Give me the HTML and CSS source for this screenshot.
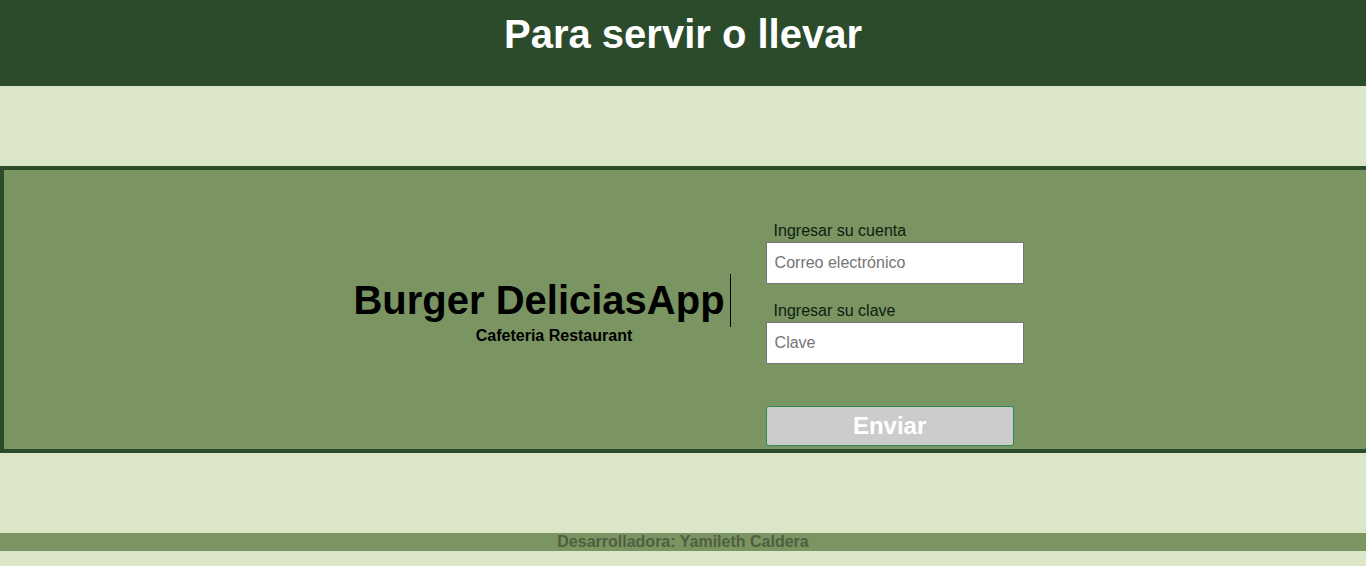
FILE: index.html
```html
<!DOCTYPE html>
<html lang="es">
<head>
<meta charset="utf-8">
<title>Burger DeliciasApp</title>
<link rel="stylesheet" href="styles.css">
</head>
<body>
<header class="top">
  <h1 class="top-title">Para servir o llevar</h1>
</header>
<main class="spacer">
  <section class="panel">
    <div class="brand">
      <h2 class="brand-name">Burger DeliciasApp</h2>
      <p class="brand-sub">Cafeteria Restaurant</p>
    </div>
    <form class="login">
      <label class="field-label" for="email">Ingresar su cuenta</label>
      <input class="field" id="email" type="email" placeholder="Correo electrónico">
      <label class="field-label second" for="pass">Ingresar su clave</label>
      <input class="field" id="pass" type="password" placeholder="Clave">
      <button class="send" type="button">Enviar</button>
    </form>
  </section>
</main>
<footer class="foot">Desarrolladora: Yamileth Caldera</footer>
</body>
</html>
```
FILE: styles.css
```css
html, body {
  margin: 0;
  padding: 0;
  overflow: hidden;
}
body {
  background: #dbe6c8;
  font-family: "Liberation Sans", Arial, sans-serif;
  height: 566px;
}
.top {
  background: #2b4b2b;
  height: 86px;
  box-sizing: border-box;
  padding-top: 11px;
}
.top-title {
  margin: 0;
  color: #fff;
  font-size: 40px;
  line-height: 46px;
  font-weight: bold;
  text-align: center;
}
.spacer {
  padding: 80px 0;
}
.panel {
  background: #7a9462;
  border: 4px solid #2b4b2b;
  border-right: none;
  height: 279px;
  display: flex;
  justify-content: center;
  align-items: center;
  gap: 35px;
  padding-left: 7px;
}
.brand {
  display: flex;
  flex-direction: column;
}
.brand-name {
  margin: 0;
  font-size: 40px;
  line-height: 46px;
  font-weight: bold;
  color: #000;
  padding-top: 3px;
  padding-bottom: 4px;
  padding-right: 5px;
  border-right: 1px solid #000;
}
.brand-sub {
  margin: 0;
  font-size: 16px;
  line-height: 18px;
  font-weight: bold;
  color: #000;
  text-align: center;
  padding-left: 24px;
}
.login {
  align-self: flex-start;
  margin-top: 52px;
  display: flex;
  flex-direction: column;
  width: 258px;
}
.field-label {
  font-size: 16px;
  line-height: 18px;
  color: #101c10;
  padding-left: 8px;
  margin-bottom: 2px;
}
.field-label.second {
  margin-top: 18px;
}
.field {
  box-sizing: border-box;
  width: 258px;
  height: 42px;
  border: 1px solid #767676;
  background: #fff;
  font-family: "Liberation Sans", Arial, sans-serif;
  font-size: 16px;
  padding: 0 8px;
  margin: 0;
  outline: none;
}
.field::placeholder {
  color: #757575;
}
.send {
  box-sizing: border-box;
  margin-top: 42px;
  width: 248px;
  height: 40px;
  background: #cccccc;
  border: 1px solid #2e8b57;
  border-radius: 3px;
  color: #fff;
  font-family: "Liberation Sans", Arial, sans-serif;
  font-size: 24px;
  font-weight: bold;
  padding: 0;
}
.foot {
  background: #7a9462;
  height: 18px;
  line-height: 18px;
  text-align: center;
  font-size: 16px;
  font-weight: bold;
  color: #4e6040;
}
```
